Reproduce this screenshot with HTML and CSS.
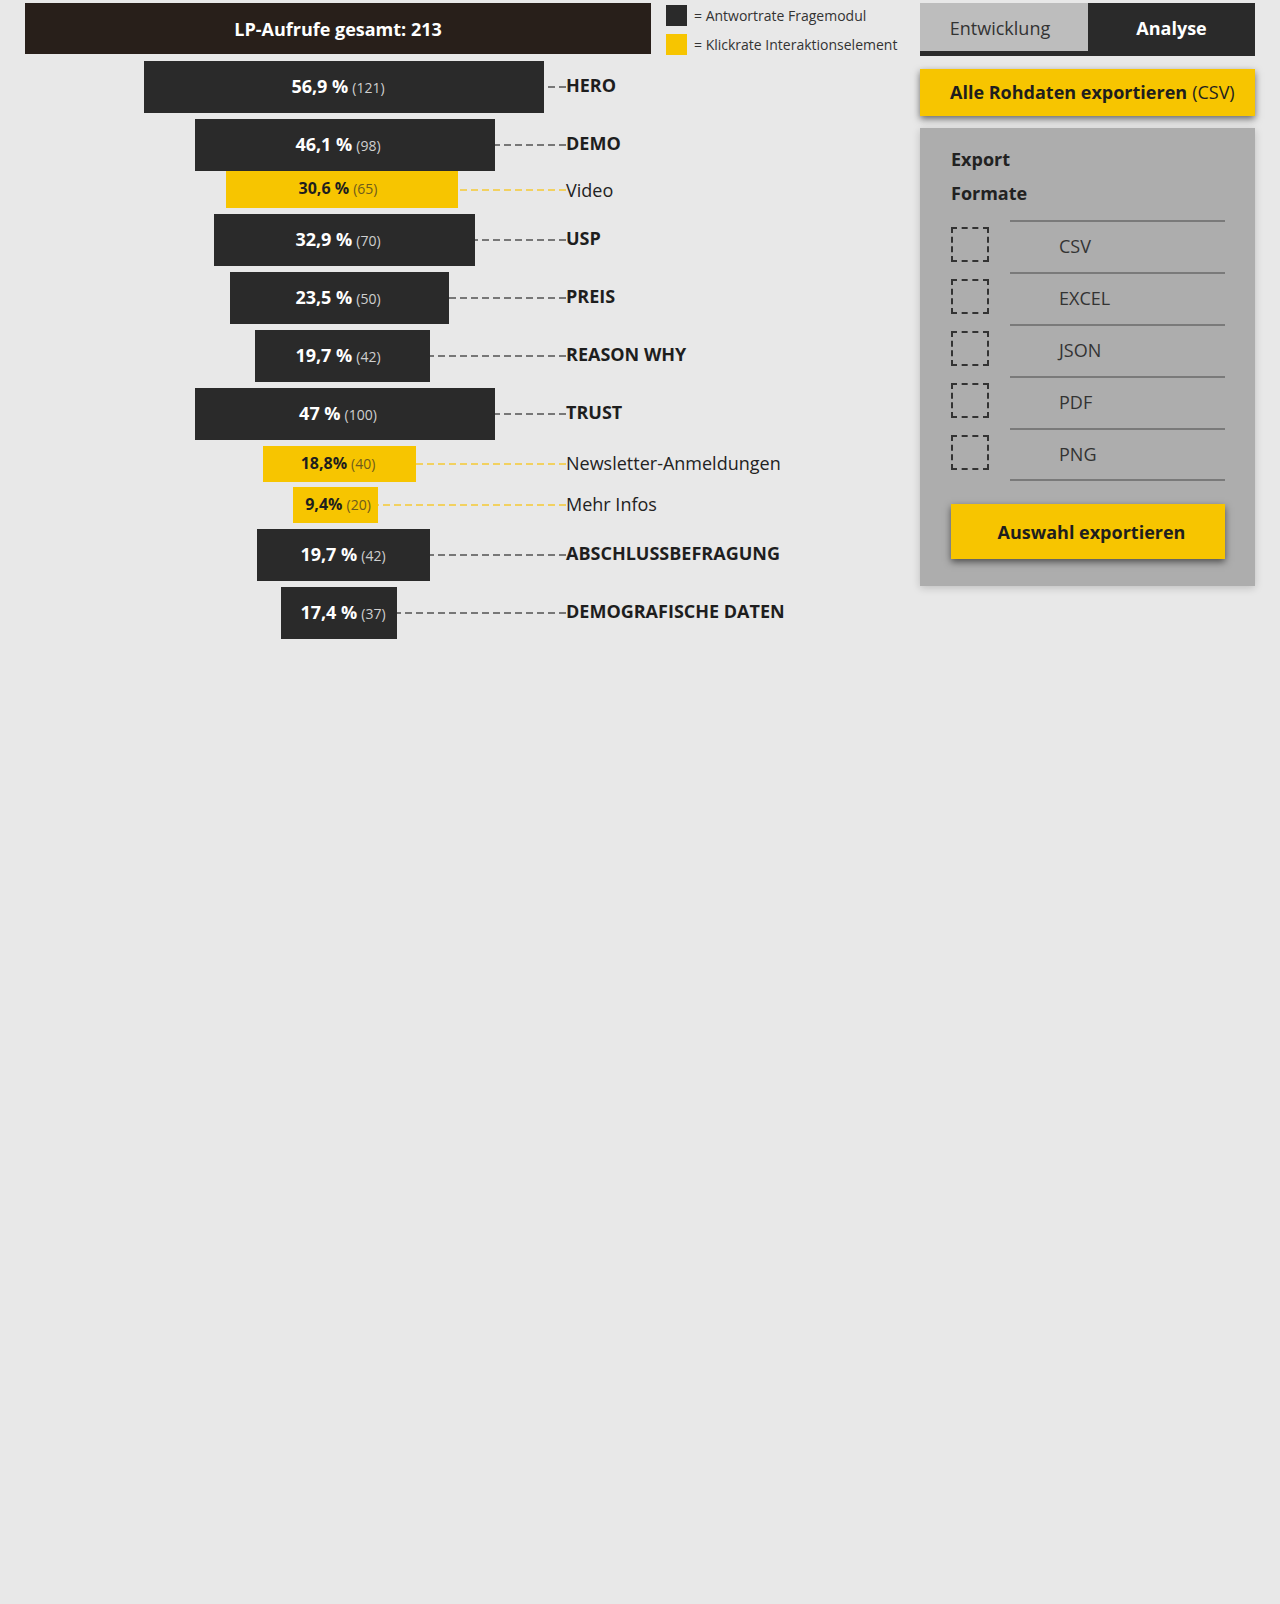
FILE: index.html
```html
<!DOCTYPE html>
<html lang="de">
<head>
<meta charset="utf-8">
<title>Funnel Analyse</title>
<link rel="stylesheet" href="styles.css">
</head>
<body>
<div class="page">
  <main class="main">
    <div class="top">
      <div class="total">LP-Aufrufe gesamt: 213</div>
      <ul class="legend">
        <li class="legend-item"><span class="swatch swatch-dark"></span>= Antwortrate Fragemodul</li>
        <li class="legend-item"><span class="swatch swatch-yellow"></span>= Klickrate Interaktionselement</li>
      </ul>
    </div>
    <div class="funnel">
      <div class="row">
        <div class="track"><div class="lane"><div class="bar" style="margin-left:119px;width:400px"></div><span class="link"></span></div><div class="value"><b>56,9 %</b><small>(121)</small></div></div>
        <span class="label">HERO</span>
      </div>
      <div class="row">
        <div class="track"><div class="lane"><div class="bar" style="margin-left:170px;width:300px"></div><span class="link"></span></div><div class="value"><b>46,1 %</b><small>(98)</small></div></div>
        <span class="label">DEMO</span>
      </div>
      <div class="row row-click row-attached">
        <div class="track"><div class="lane"><div class="bar" style="margin-left:201px;width:232px"></div><span class="link"></span></div><div class="value"><b>30,6 %</b><small>(65)</small></div></div>
        <span class="label">Video</span>
      </div>
      <div class="row">
        <div class="track"><div class="lane"><div class="bar" style="margin-left:189px;width:261px"></div><span class="link"></span></div><div class="value"><b>32,9 %</b><small>(70)</small></div></div>
        <span class="label">USP</span>
      </div>
      <div class="row">
        <div class="track"><div class="lane"><div class="bar" style="margin-left:205px;width:219px"></div><span class="link"></span></div><div class="value"><b>23,5 %</b><small>(50)</small></div></div>
        <span class="label">PREIS</span>
      </div>
      <div class="row">
        <div class="track"><div class="lane"><div class="bar" style="margin-left:230px;width:175px"></div><span class="link"></span></div><div class="value"><b>19,7 %</b><small>(42)</small></div></div>
        <span class="label">REASON WHY</span>
      </div>
      <div class="row">
        <div class="track"><div class="lane"><div class="bar" style="margin-left:170px;width:300px"></div><span class="link"></span></div><div class="value"><b>47 %</b><small>(100)</small></div></div>
        <span class="label">TRUST</span>
      </div>
      <div class="row row-click">
        <div class="track"><div class="lane"><div class="bar" style="margin-left:238px;width:153px"></div><span class="link"></span></div><div class="value"><b>18,8%</b><small>(40)</small></div></div>
        <span class="label">Newsletter-Anmeldungen</span>
      </div>
      <div class="row row-click row-tight">
        <div class="track"><div class="lane"><div class="bar" style="margin-left:268px;width:85px"></div><span class="link"></span></div><div class="value"><b>9,4%</b><small>(20)</small></div></div>
        <span class="label">Mehr Infos</span>
      </div>
      <div class="row">
        <div class="track"><div class="lane"><div class="bar" style="margin-left:232px;width:173px"></div><span class="link"></span></div><div class="value value-shift"><b>19,7 %</b><small>(42)</small></div></div>
        <span class="label">ABSCHLUSSBEFRAGUNG</span>
      </div>
      <div class="row">
        <div class="track"><div class="lane"><div class="bar" style="margin-left:256px;width:116px"></div><span class="link"></span></div><div class="value value-shift"><b>17,4 %</b><small>(37)</small></div></div>
        <span class="label">DEMOGRAFISCHE DATEN</span>
      </div>
    </div>
  </main>

  <aside class="side">
    <nav class="tabs">
      <span class="tab">Entwicklung</span>
      <span class="tab tab-active">Analyse</span>
    </nav>
    <button class="btn btn-raw"><b>Alle Rohdaten exportieren</b> (CSV)</button>
    <section class="export">
      <h2 class="export-title">Export</h2>
      <h3 class="export-sub">Formate</h3>
      <ul class="formats">
        <li class="format"><span class="check"></span><span class="format-name">CSV</span></li>
        <li class="format"><span class="check"></span><span class="format-name">EXCEL</span></li>
        <li class="format"><span class="check"></span><span class="format-name">JSON</span></li>
        <li class="format"><span class="check"></span><span class="format-name">PDF</span></li>
        <li class="format format-last"><span class="check"></span><span class="format-name">PNG</span></li>
      </ul>
      <button class="btn btn-export">Auswahl exportieren</button>
    </section>
  </aside>
</div>
</body>
</html>
```

FILE: styles.css
```css
* { box-sizing: border-box; }

html, body {
  margin: 0;
  padding: 0;
  background: #e8e8e8;
  font-family: "Open Sans", "Liberation Sans", sans-serif;
  color: #222;
}

.page {
  display: flex;
  padding: 3px 25px 0 25px;
  min-height: 1604px;
}

.main {
  width: 895px;
  flex: none;
}

.top {
  display: flex;
  align-items: flex-start;
}

.total {
  width: 626px;
  height: 51px;
  background: #281f1a;
  color: #fff;
  font-weight: 700;
  font-size: 18px;
  display: flex;
  align-items: center;
  justify-content: center;
}

.legend {
  list-style: none;
  margin: 2px 0 0 15px;
  padding: 0;
  display: flex;
  flex-direction: column;
  gap: 8px;
}

.legend-item {
  display: flex;
  align-items: center;
  font-size: 14px;
  color: #333;
  height: 21px;
}

.swatch {
  width: 21px;
  height: 21px;
  margin-right: 7px;
  flex: none;
}
.swatch-dark { background: #2a2a2a; }
.swatch-yellow { background: #f7c500; }

.funnel {
  margin-top: 6px;
  display: flex;
  flex-direction: column;
  gap: 6px;
}

.row {
  display: grid;
  grid-template-columns: 541px auto;
  align-items: center;
  height: 52px;
}

.track {
  display: grid;
  grid-template-columns: 541px;
  height: 100%;
}

.lane {
  grid-area: 1 / 1;
  display: flex;
  align-items: center;
  height: 100%;
}

.bar {
  height: 100%;
  flex: none;
  background: #2a2a2a;
}

.value {
  grid-area: 1 / 1;
  width: 626px;
  display: flex;
  align-items: baseline;
  justify-content: center;
  padding-top: 13px;
  color: #fff;
  white-space: nowrap;
}

.value-shift { padding-left: 10px; }

.value b {
  font-size: 18px;
  font-weight: 700;
}

.value small {
  font-size: 14px;
  color: #cfcfcf;
  margin-left: 4px;
}

.link {
  flex: 1;
  height: 2px;
  background: repeating-linear-gradient(to left, #777 0 7px, transparent 7px 11px);
}

.label {
  font-size: 18px;
  font-weight: 700;
  color: #1e1e1e;
  white-space: nowrap;
  margin-bottom: 5px;
}

.row-click {
  height: 36px;
}
.row-click .bar {
  background: #f7c500;
}
.row-click .value {
  color: #1e1e1e;
  padding-top: 6px;
}
.row-click .value b { font-size: 16px; }
.row-click .value small { color: #6e5b1c; font-size: 14px; }
.row-click .link {
  background: repeating-linear-gradient(to left, #f2d160 0 7px, transparent 7px 11px);
}
.row-click .label {
  font-weight: 400;
  color: #222;
  margin-bottom: 3px;
}
.row-attached .label { margin-bottom: 0; }

.row-attached {
  margin-top: -6px;
  height: 37px;
}

.row-tight { margin-top: -1px; }

/* side panel */
.side {
  width: 335px;
  flex: none;
}

.tabs {
  display: flex;
  height: 53px;
  background: #2a2a2a;
  align-items: flex-start;
}

.tab {
  height: 48px;
  display: flex;
  align-items: center;
  justify-content: center;
  font-size: 18px;
  flex: 1;
  color: #fff;
  font-weight: 700;
  padding-top: 1px;
}

.tab:first-child {
  flex: none;
  width: 168px;
  background: #bdbdbd;
  color: #333;
  font-weight: 400;
  padding-right: 8px;
}

.btn {
  display: flex;
  align-items: center;
  border: 0;
  background: #f7c500;
  font-family: inherit;
  font-size: 18px;
  color: #1e1e1e;
  box-shadow: 0 3px 7px rgba(0, 0, 0, 0.55);
  cursor: pointer;
}

.btn-raw {
  margin-top: 13px;
  width: 100%;
  height: 47px;
  padding: 0 0 2px 30px;
  font-weight: 400;
}
.btn-raw b { font-weight: 700; margin-right: 5px; }

.export {
  margin-top: 12px;
  height: 458px;
  background: #adadad;
  padding: 14px 30px 0 31px;
  box-shadow: 0 2px 8px rgba(0, 0, 0, 0.18);
}

.export-title,
.export-sub {
  margin: 0;
  font-size: 18px;
  font-weight: 700;
  line-height: 34px;
  color: #222;
}

.formats {
  list-style: none;
  margin: 10px 0 0 0;
  padding: 0;
}

.format {
  display: grid;
  grid-template-columns: 38px 1fr;
  column-gap: 21px;
  height: 52px;
}

.check {
  margin-top: 7px;
  width: 38px;
  height: 35px;
  border: 2px dashed #333;
}

.format-name {
  border-top: 2px solid #7a7a7a;
  padding: 0 0 2px 49px;
  display: flex;
  align-items: center;
  font-size: 18px;
  color: #333;
}

.format-last {
  height: 53px;
}
.format-last .format-name {
  border-bottom: 2px solid #7a7a7a;
}

.btn-export {
  margin-top: 23px;
  width: 100%;
  height: 55px;
  justify-content: center;
  font-weight: 700;
  padding: 0 0 0 7px;
}
```
